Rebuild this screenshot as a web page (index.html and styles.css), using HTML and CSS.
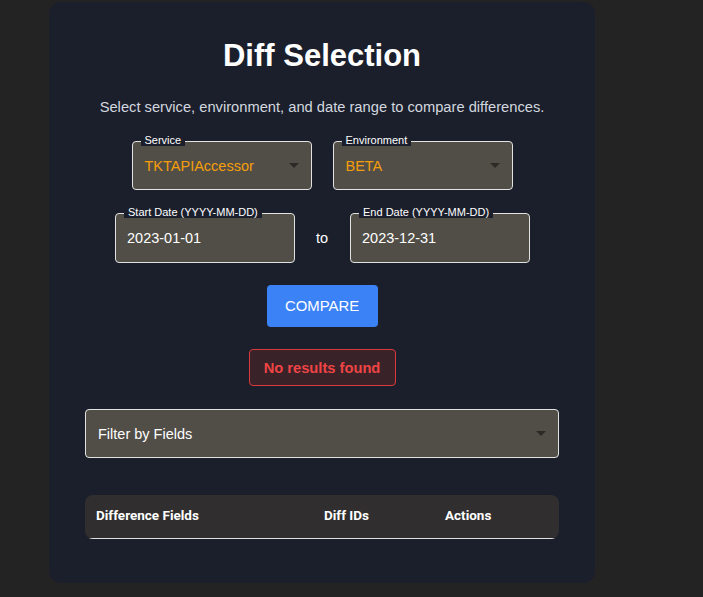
FILE: index.html
```html
<!DOCTYPE html>
<html lang="en">
<head>
<meta charset="utf-8">
<title>Diff Selection</title>
<link rel="stylesheet" href="styles.css">
</head>
<body>
<main class="card">
  <h1 class="title">Diff Selection</h1>
  <p class="subtitle">Select service, environment, and date range to compare differences.</p>

  <div class="row row-selects">
    <div class="field select">
      <span class="label">Service</span>
      <span class="value accent">TKTAPIAccessor</span>
      <span class="arrow"></span>
    </div>
    <div class="field select">
      <span class="label">Environment</span>
      <span class="value accent">BETA</span>
      <span class="arrow"></span>
    </div>
  </div>

  <div class="row row-dates">
    <div class="field date">
      <span class="label">Start Date (YYYY-MM-DD)</span>
      <span class="value">2023-01-01</span>
    </div>
    <span class="to">to</span>
    <div class="field date">
      <span class="label">End Date (YYYY-MM-DD)</span>
      <span class="value">2023-12-31</span>
    </div>
  </div>

  <button class="compare" type="button">COMPARE</button>

  <div class="error">No results found</div>

  <div class="filter">
    <span class="filter-text">Filter by Fields</span>
    <span class="arrow"></span>
  </div>

  <div class="table">
    <div class="thead">
      <span>Difference Fields</span>
      <span>Diff IDs</span>
      <span>Actions</span>
    </div>
  </div>
</main>
</body>
</html>
```

FILE: styles.css
```css
* { box-sizing: border-box; }

html, body {
  margin: 0;
  padding: 0;
  background: #232323;
  font-family: "Liberation Sans", Arial, sans-serif;
  color: #ffffff;
}

body {
  height: 597px;
  overflow: hidden;
}

.card {
  margin: 2px 0 0 49px;
  width: 546px;
  height: 581px;
  background: #1b1f2c;
  border-radius: 12px;
  padding: 36px 36px 44px;
  display: flex;
  flex-direction: column;
  align-items: center;
}

.title {
  margin: 0;
  font-size: 31px;
  line-height: 36px;
  font-weight: 700;
  color: #ffffff;
}

.subtitle {
  margin: 23px 0 0;
  font-size: 14.7px;
  line-height: 20px;
  color: #d3d7df;
}

.row {
  display: flex;
  align-items: center;
  justify-content: center;
}

.row-selects {
  margin-top: 24px;
  gap: 21px;
}

.row-dates {
  margin-top: 23px;
  gap: 21px;
  padding-left: 1px;
}

.field {
  position: relative;
  width: 180px;
  background: #514e47;
  border: 1px solid #e2e2e2;
  border-radius: 4px;
  display: flex;
  align-items: center;
}

.select {
  height: 49px;
  padding: 0 12px;
}

.date {
  height: 50px;
  padding: 0 11px;
}

.label {
  position: absolute;
  top: -8px;
  left: 8px;
  padding: 0 4px;
  background: #1b1f2c;
  font-size: 11px;
  line-height: 12px;
  color: #ffffff;
  white-space: nowrap;
}

.value {
  flex: 1;
  font-size: 14.5px;
  color: #ffffff;
}

.value.accent {
  color: #f59e0b;
}

.arrow {
  width: 0;
  height: 0;
  border-left: 5px solid transparent;
  border-right: 5px solid transparent;
  border-top: 5px solid #2b2a27;
}

.to {
  font-size: 14.5px;
  color: #ffffff;
  width: 13px;
}

.compare {
  margin-top: 22px;
  width: 111px;
  height: 42px;
  background: #3b82f6;
  border: none;
  border-radius: 4px;
  color: #ffffff;
  font-family: "Liberation Sans", Arial, sans-serif;
  font-size: 14.9px;
  padding: 0;
}

.error {
  margin-top: 22px;
  width: 147px;
  height: 37px;
  display: flex;
  align-items: center;
  justify-content: center;
  background: #3a2229;
  border: 1px solid #d9393b;
  border-radius: 4px;
  color: #ef4444;
  font-size: 14.7px;
  font-weight: 700;
}

.filter {
  margin-top: 23px;
  width: 474px;
  height: 49px;
  background: #514e47;
  border: 1px solid #e2e2e2;
  border-radius: 4px;
  display: flex;
  align-items: center;
  padding: 0 12px;
}

.filter-text {
  flex: 1;
  font-size: 14.5px;
  color: #ffffff;
}

.table {
  margin-top: 37px;
  width: 474px;
  border-radius: 8px;
  overflow: hidden;
  background: #302e2e;
}

.thead {
  height: 44px;
  display: grid;
  grid-template-columns: 228px 121px 1fr;
  align-items: center;
  padding: 0 11px 3px;
  border-bottom: 1px solid #e0e0e0;
  font-family: Roboto, "Liberation Sans", Arial, sans-serif;
  font-weight: 700;
  font-size: 13.5px;
  color: #ffffff;
}
```
